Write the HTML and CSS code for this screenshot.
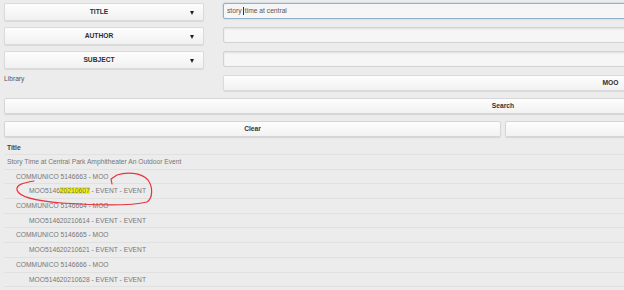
FILE: index.html
```html
<!DOCTYPE html>
<html lang="en">
<head>
  <meta charset="UTF-8" />
  <meta name="viewport" content="width=device-width, initial-scale=1.0"/>
  <title>Event Search</title>
  <link rel="stylesheet" href="styles.css">
</head>
<body>

<div class="page">

  <!-- Search fields -->
  <div class="field-row">
    <div class="select-btn"><span>TITLE</span><i class="arrow"></i></div>
    <div class="text-input focused">story <span class="caret"></span>time at central</div>
  </div>
  <div class="field-row">
    <div class="select-btn"><span>AUTHOR</span><i class="arrow"></i></div>
    <div class="text-input"></div>
  </div>
  <div class="field-row">
    <div class="select-btn"><span>SUBJECT</span><i class="arrow"></i></div>
    <div class="text-input"></div>
  </div>

  <div class="field-row library-row">
    <label class="field-label">Library</label>
    <div class="select-btn library"><span>MOO</span></div>
  </div>

  <!-- Buttons -->
  <div class="btn search">Search</div>
  <div class="btn-row">
    <div class="btn">Clear</div>
    <div class="btn"></div>
  </div>

  <!-- Results -->
  <div class="results">
    <div class="row head">Title</div>
    <div class="row">Story Time at Central Park Amphitheater An Outdoor Event</div>
    <div class="row lvl1">COMMUNICO 5146663 - MOO</div>
    <div class="row lvl2">MOO5146<mark>20210607</mark> - EVENT - EVENT</div>
    <div class="row lvl1">COMMUNICO 5146664 - MOO</div>
    <div class="row lvl2">MOO514620210614 - EVENT - EVENT</div>
    <div class="row lvl1">COMMUNICO 5146665 - MOO</div>
    <div class="row lvl2">MOO514620210621 - EVENT - EVENT</div>
    <div class="row lvl1">COMMUNICO 5146666 - MOO</div>
    <div class="row lvl2">MOO514620210628 - EVENT - EVENT</div>
  </div>

  <!-- hand drawn mark over the first event -->
  <svg class="scribble" width="624" height="290" viewBox="0 0 624 290">
    <path d="M112 184 L111 179 L117 175 C126 172 141 172 148 180 C153 187 153 198 147 202 C131 206 92 205 62 203 C36 201 19 197 17 190 C16 185 22 183 34 181"
          fill="none" stroke="#e5343c" stroke-width="1.2" stroke-linecap="round" stroke-linejoin="round"/>
  </svg>

</div>

</body>
</html>
```

FILE: styles.css
```css
html, body {
  margin: 0;
  overflow: hidden;
}
body {
  font-family: "Liberation Sans", Arial, sans-serif;
  font-size: 6.7px;
  background: #ececec;
  color: #333;
}
.page {
  position: relative;
  width: 998px;
  padding: 3px 4px 0;
}
.field-row {
  display: grid;
  grid-template-columns: 200px 1fr;
  column-gap: 19px;
  height: 18px;
  margin-bottom: 6px;
  align-items: start;
}
.select-btn {
  position: relative;
  box-sizing: border-box;
  height: 18px;
  display: flex;
  align-items: center;
  justify-content: center;
  padding-right: 10px;
  padding-bottom: 1px;
  border: 1px solid #dadada;
  border-radius: 2px;
  background: linear-gradient(#fdfdfd, #f1f1f1);
  box-shadow: 0 1px 1px rgba(0,0,0,0.08);
  font-weight: bold;
  color: #2d2d2d;
}
.arrow {
  position: absolute;
  right: 9px;
  top: 6.5px;
  border-left: 2.5px solid transparent;
  border-right: 2.5px solid transparent;
  border-top: 4px solid #222;
}
.text-input {
  box-sizing: border-box;
  height: 16px;
  padding: 0 3px;
  line-height: 13px;
  border: 1px solid #d2d2d2;
  border-radius: 2px;
  background: #f6f6f6;
  box-shadow: inset 0 1px 2px rgba(0,0,0,0.1);
  color: #555;
  white-space: nowrap;
}
.text-input.focused {
  border-color: #8fb2c6;
  box-shadow: 0 0 2px #9cc3da;
}
.caret {
  display: inline-block;
  width: 0;
  height: 8px;
  margin-right: 0.5px;
  border-left: 1px solid #333;
  vertical-align: -1.5px;
}
.library-row {
  height: 16px;
  margin-bottom: 7px;
}
.field-label {
  padding-top: 2px;
  color: #555;
  line-height: 4px;
}
.select-btn.library {
  height: 16px;
  padding-right: 4px;
}
.btn {
  box-sizing: border-box;
  height: 16px;
  display: flex;
  align-items: center;
  justify-content: center;
  padding-bottom: 1px;
  border: 1px solid #d6d6d6;
  border-radius: 2px;
  background: linear-gradient(#fdfdfd, #f2f2f2);
  box-shadow: 0 1px 1px rgba(0,0,0,0.1);
  font-weight: bold;
  color: #333;
}
.btn-row {
  display: grid;
  grid-template-columns: 1fr 1fr;
  column-gap: 4px;
  margin-top: 7px;
}
.results {
  margin-top: 4px;
}
.row {
  box-sizing: border-box;
  height: 14.7px;
  line-height: 13.7px;
  padding-left: 3px;
  border-bottom: 1px solid #e1e1e1;
  color: #777;
  white-space: nowrap;
}
.row.head {
  height: 14px;
  line-height: 13px;
  font-weight: bold;
  color: #444;
}
.row.lvl1 {
  padding-left: 12px;
}
.row.lvl2 {
  padding-left: 25px;
}
mark {
  background: #f2f200;
  color: #777;
}
.scribble {
  position: absolute;
  left: 0;
  top: 0;
  pointer-events: none;
}
```
